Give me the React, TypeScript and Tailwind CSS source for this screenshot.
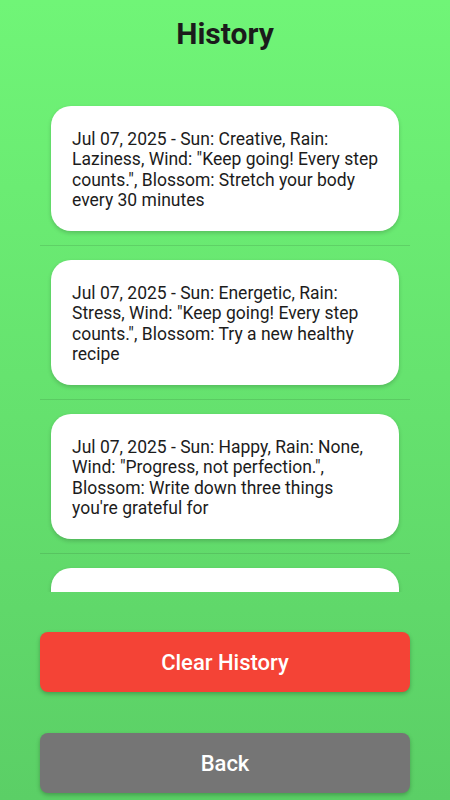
import React from "react";

const entries = [
  'Jul 07, 2025 - Sun: Creative, Rain: Laziness, Wind: "Keep going! Every step counts.", Blossom: Stretch your body every 30 minutes',
  'Jul 07, 2025 - Sun: Energetic, Rain: Stress, Wind: "Keep going! Every step counts.", Blossom: Try a new healthy recipe',
  'Jul 07, 2025 - Sun: Happy, Rain: None, Wind: "Progress, not perfection.", Blossom: Write down three things you\'re grateful for',
  "",
];

export default function App() {
  return (
    <div
      className="flex h-[800px] w-[450px] flex-col overflow-hidden bg-gradient-to-b from-[#70f577] to-[#5bcf66] px-10"
      style={{ fontFamily: "Roboto, 'Noto Sans', sans-serif" }}
    >
      <h1 className="mt-[17px] text-center text-[30px] font-bold leading-[34px] text-[#1b1b1b]">History</h1>

      {/* Lista con scroll */}
      <div className="mt-[41px] h-[500px] overflow-hidden">
        {entries.map((e, i) => (
          <div key={i} className="border-b border-black/10">
            <div className="mx-[11px] my-[14px] h-[125px] rounded-[20px] bg-white pl-[21px] pr-[20px] pt-[23px] text-[17.5px] leading-[20.4px] text-[#1c1c1c] shadow-[0_2px_4px_rgba(0,0,0,0.18)]">
              {e}
            </div>
          </div>
        ))}
      </div>

      <button
        type="button"
        className="mt-[40px] h-[60px] w-full rounded-lg bg-[#f44336] text-[22px] font-medium text-white shadow-[0_2px_4px_rgba(0,0,0,0.25)]"
      >
        Clear History
      </button>
      <button
        type="button"
        className="mt-[41px] h-[60px] w-full rounded-lg bg-[#757575] text-[22px] font-medium text-white shadow-[0_2px_4px_rgba(0,0,0,0.25)]"
      >
        Back
      </button>
    </div>
  );
}
